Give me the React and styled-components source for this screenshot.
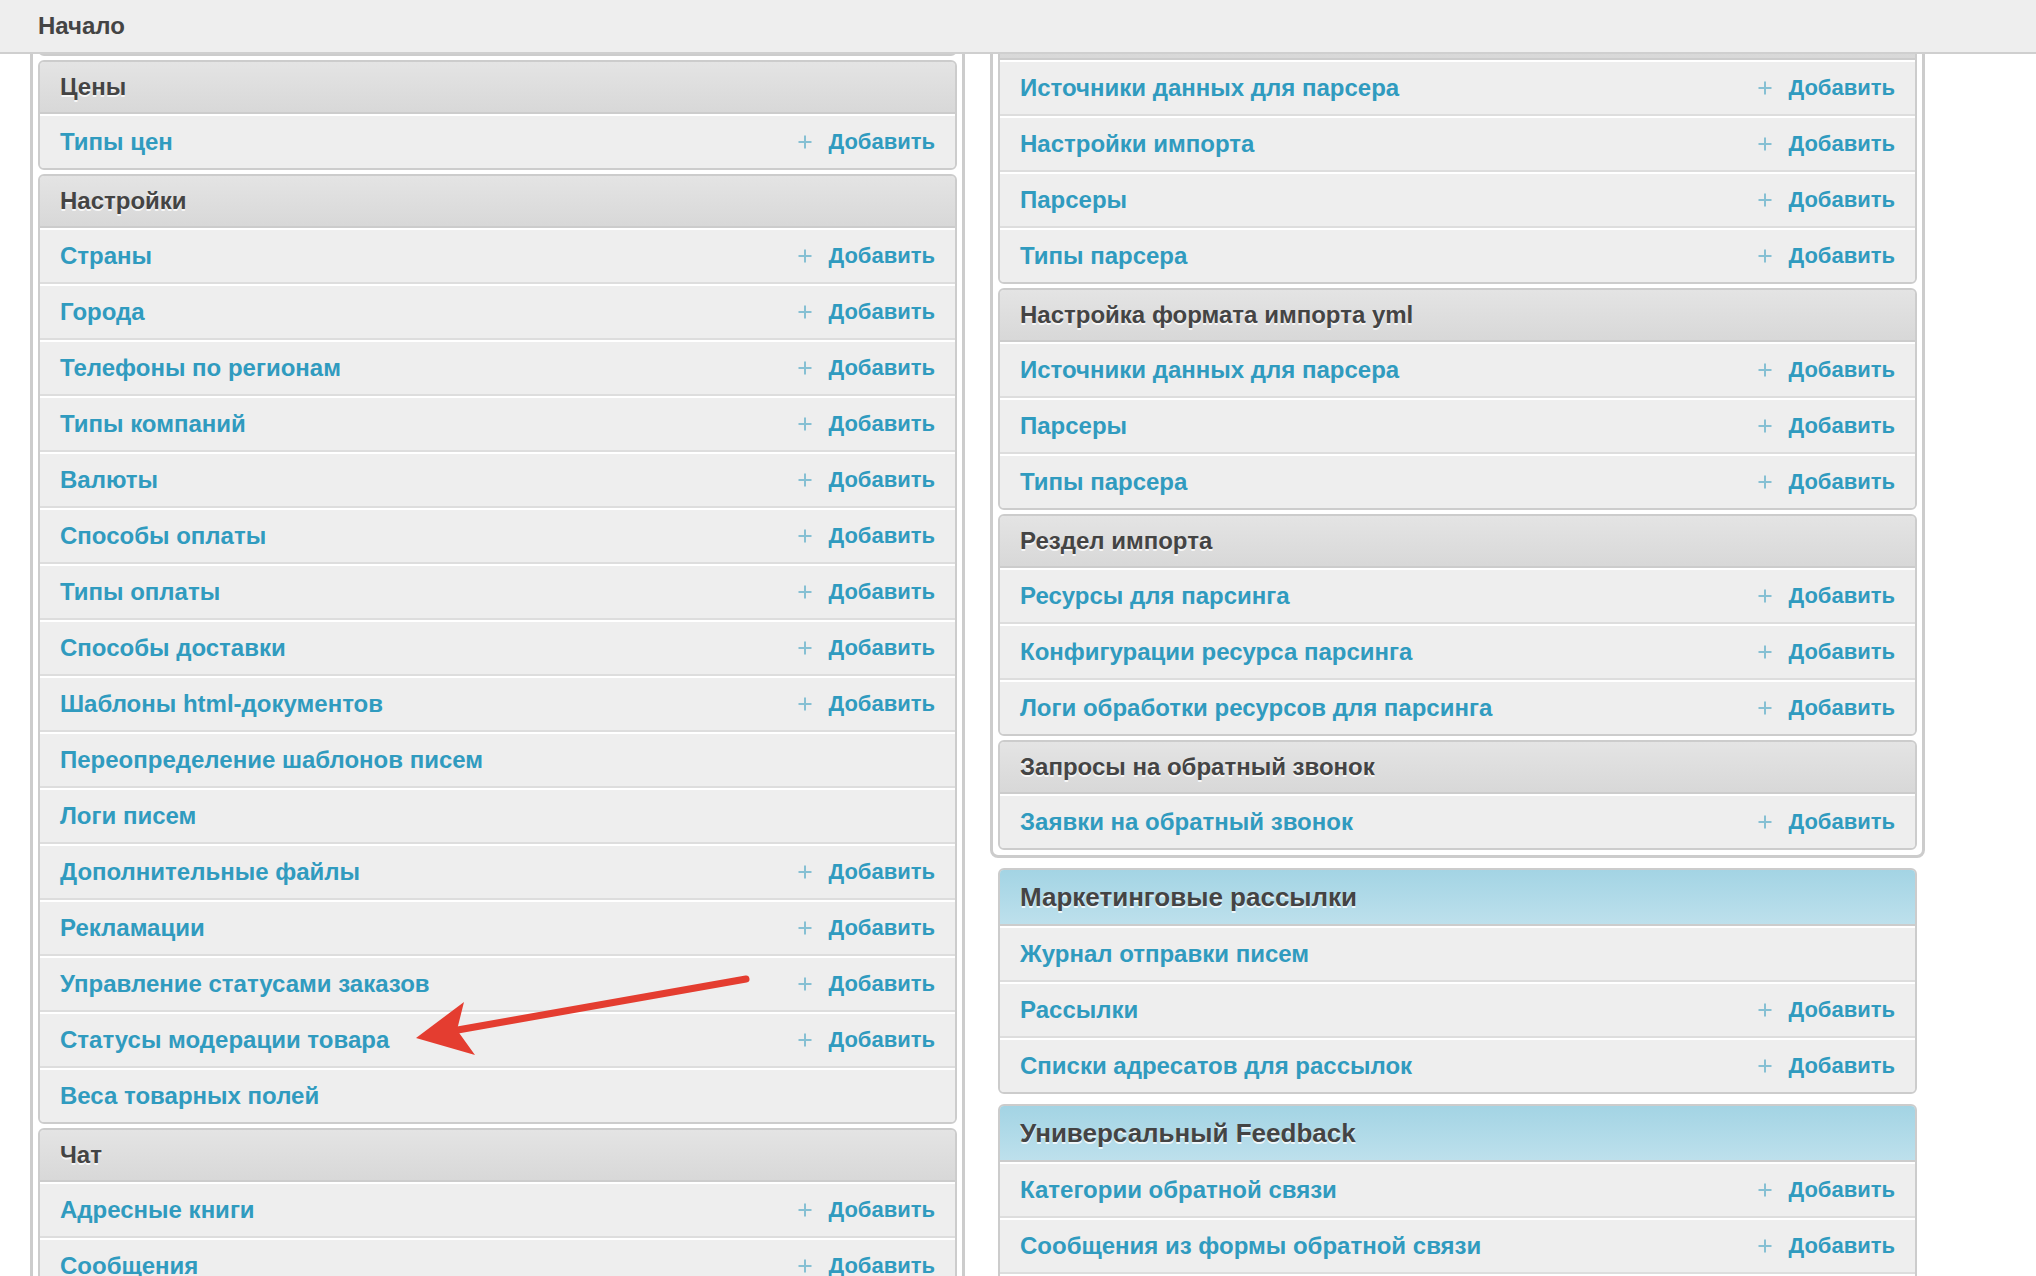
import React from "react"
import styled, { createGlobalStyle } from "styled-components"

const GlobalStyle = createGlobalStyle`
  html, body {
    margin: 0;
    padding: 0;
    background: #fff;
    overflow: hidden;
  }
  body {
    font-family: "Liberation Sans", Arial, sans-serif;
  }
`

const leftGroups = [
  { title: "Каталог", rows: [{ name: "Товары", add: true }] },
  { title: "Цены", rows: [{ name: "Типы цен", add: true }] },
  {
    title: "Настройки",
    rows: [
      { name: "Страны", add: true },
      { name: "Города", add: true },
      { name: "Телефоны по регионам", add: true },
      { name: "Типы компаний", add: true },
      { name: "Валюты", add: true },
      { name: "Способы оплаты", add: true },
      { name: "Типы оплаты", add: true },
      { name: "Способы доставки", add: true },
      { name: "Шаблоны html-документов", add: true },
      { name: "Переопределение шаблонов писем", add: false },
      { name: "Логи писем", add: false },
      { name: "Дополнительные файлы", add: true },
      { name: "Рекламации", add: true },
      { name: "Управление статусами заказов", add: true },
      { name: "Статусы модерации товара", add: true },
      { name: "Веса товарных полей", add: false },
    ],
  },
  {
    title: "Чат",
    rows: [
      { name: "Адресные книги", add: true },
      { name: "Сообщения", add: true },
      { name: "Чаты", add: true },
    ],
  },
]

const rightGroups = [
  { title: "Склад", rows: [] },
  {
    title: "Импорт",
    rows: [
      { name: "Источники данных для парсера", add: true },
      { name: "Настройки импорта", add: true },
      { name: "Парсеры", add: true },
      { name: "Типы парсера", add: true },
    ],
  },
  {
    title: "Настройка формата импорта yml",
    rows: [
      { name: "Источники данных для парсера", add: true },
      { name: "Парсеры", add: true },
      { name: "Типы парсера", add: true },
    ],
  },
  {
    title: "Рездел импорта",
    rows: [
      { name: "Ресурсы для парсинга", add: true },
      { name: "Конфигурации ресурса парсинга", add: true },
      { name: "Логи обработки ресурсов для парсинга", add: true },
    ],
  },
  {
    title: "Запросы на обратный звонок",
    rows: [{ name: "Заявки на обратный звонок", add: true }],
  },
]

const modules = [
  {
    title: "Маркетинговые рассылки",
    rows: [
      { name: "Журнал отправки писем", add: false },
      { name: "Рассылки", add: true },
      { name: "Списки адресатов для рассылок", add: true },
    ],
  },
  {
    title: "Универсальный Feedback",
    rows: [
      { name: "Категории обратной связи", add: true },
      { name: "Сообщения из формы обратной связи", add: true },
      { name: "Формы обратной связи", add: true },
    ],
  },
]

const PlusIcon = () => (
  <svg width="14" height="14" viewBox="0 0 14 14">
    <path d="M7 0.5V13.5M0.5 7H13.5" stroke="#86c0d3" strokeWidth="2" />
  </svg>
)

const ModelRow = ({ name, add }) => (
  <Row>
    <RowLink>{name}</RowLink>
    {add && (
      <AddLink>
        <PlusIcon />
        <span>Добавить</span>
      </AddLink>
    )}
  </Row>
)

const AppPanel = ({ title, rows, $blue }) => (
  <Panel $blue={$blue}>
    <PanelHeader $blue={$blue}>{title}</PanelHeader>
    {rows.map((row, i) => (
      <ModelRow key={i} name={row.name} add={row.add} />
    ))}
  </Panel>
)

const Arrow = () => (
  <ArrowLayer width="2036" height="1276" viewBox="0 0 2036 1276">
    <line
      x1="746"
      y1="979"
      x2="452"
      y2="1031"
      stroke="#e43d30"
      strokeWidth="7"
      strokeLinecap="round"
    />
    <polygon points="416,1038 464,1002 457,1030 475,1055" fill="#e43d30" />
  </ArrowLayer>
)

const App = () => (
  <>
    <GlobalStyle />
    <TopBar>
      <Crumb>Начало</Crumb>
    </TopBar>
    <Columns>
      <Column>
        <Group>
          {leftGroups.map((g, i) => (
            <AppPanel key={i} title={g.title} rows={g.rows} />
          ))}
        </Group>
      </Column>
      <Column>
        <Group>
          {rightGroups.map((g, i) => (
            <AppPanel key={i} title={g.title} rows={g.rows} />
          ))}
        </Group>
        {modules.map((m, i) => (
          <Module key={i}>
            <AppPanel title={m.title} rows={m.rows} $blue />
          </Module>
        ))}
      </Column>
    </Columns>
    <Arrow />
  </>
)

const TopBar = styled.div`
  position: fixed;
  top: 0;
  left: 0;
  right: 0;
  z-index: 10;
  display: flex;
  align-items: center;
  height: 52px;
  padding: 0 38px;
  background: #eeeeee;
  border-bottom: 2px solid #cfcfcf;
`

const Crumb = styled.span`
  color: #444;
  font-size: 24px;
  font-weight: bold;
`

const Columns = styled.div`
  display: flex;
  align-items: flex-start;
  gap: 25px;
  margin-top: -62px;
  padding: 0 30px;
`

const Column = styled.div`
  display: flex;
  flex-direction: column;
  width: 935px;
`

const Group = styled.div`
  display: flex;
  flex-direction: column;
  gap: 4px;
  padding: 5px;
  margin-bottom: 10px;
  border: 3px solid #cccccc;
  border-radius: 8px;
`

const Module = styled.div`
  margin: 0 8px 10px;
`

const Panel = styled.div`
  border: 2px solid #cccccc;
  border-radius: 6px;
  overflow: hidden;
  background: #eeeeee;
`

const PanelHeader = styled.div`
  display: flex;
  align-items: center;
  height: ${(p) => (p.$blue ? "54px" : "50px")};
  padding: 0 20px;
  border-bottom: 2px solid #cccccc;
  background: ${(p) =>
    p.$blue
      ? "linear-gradient(#a3d4e4, #bde0ec)"
      : "linear-gradient(#e4e4e4, #d8d8d8)"};
  color: #444;
  font-size: ${(p) => (p.$blue ? "26px" : "24px")};
  font-weight: bold;
  text-shadow: 0 2px 0 rgba(255, 255, 255, 0.8);
`

const Row = styled.div`
  display: flex;
  align-items: center;
  justify-content: space-between;
  height: 52px;
  padding: 0 20px;
  border-top: 2px solid #ffffff;
  border-bottom: 2px solid #dddddd;
  background: #eeeeee;

  &:last-child {
    border-bottom: none;
  }
`

const RowLink = styled.a`
  color: #309bbf;
  font-size: 24px;
  font-weight: bold;
  text-decoration: none;
`

const AddLink = styled.a`
  display: flex;
  align-items: center;
  gap: 16px;
  color: #309bbf;
  font-size: 22px;
  font-weight: bold;
  text-decoration: none;
`

const ArrowLayer = styled.svg`
  position: fixed;
  top: 0;
  left: 0;
  z-index: 20;
  pointer-events: none;
`

export default App
